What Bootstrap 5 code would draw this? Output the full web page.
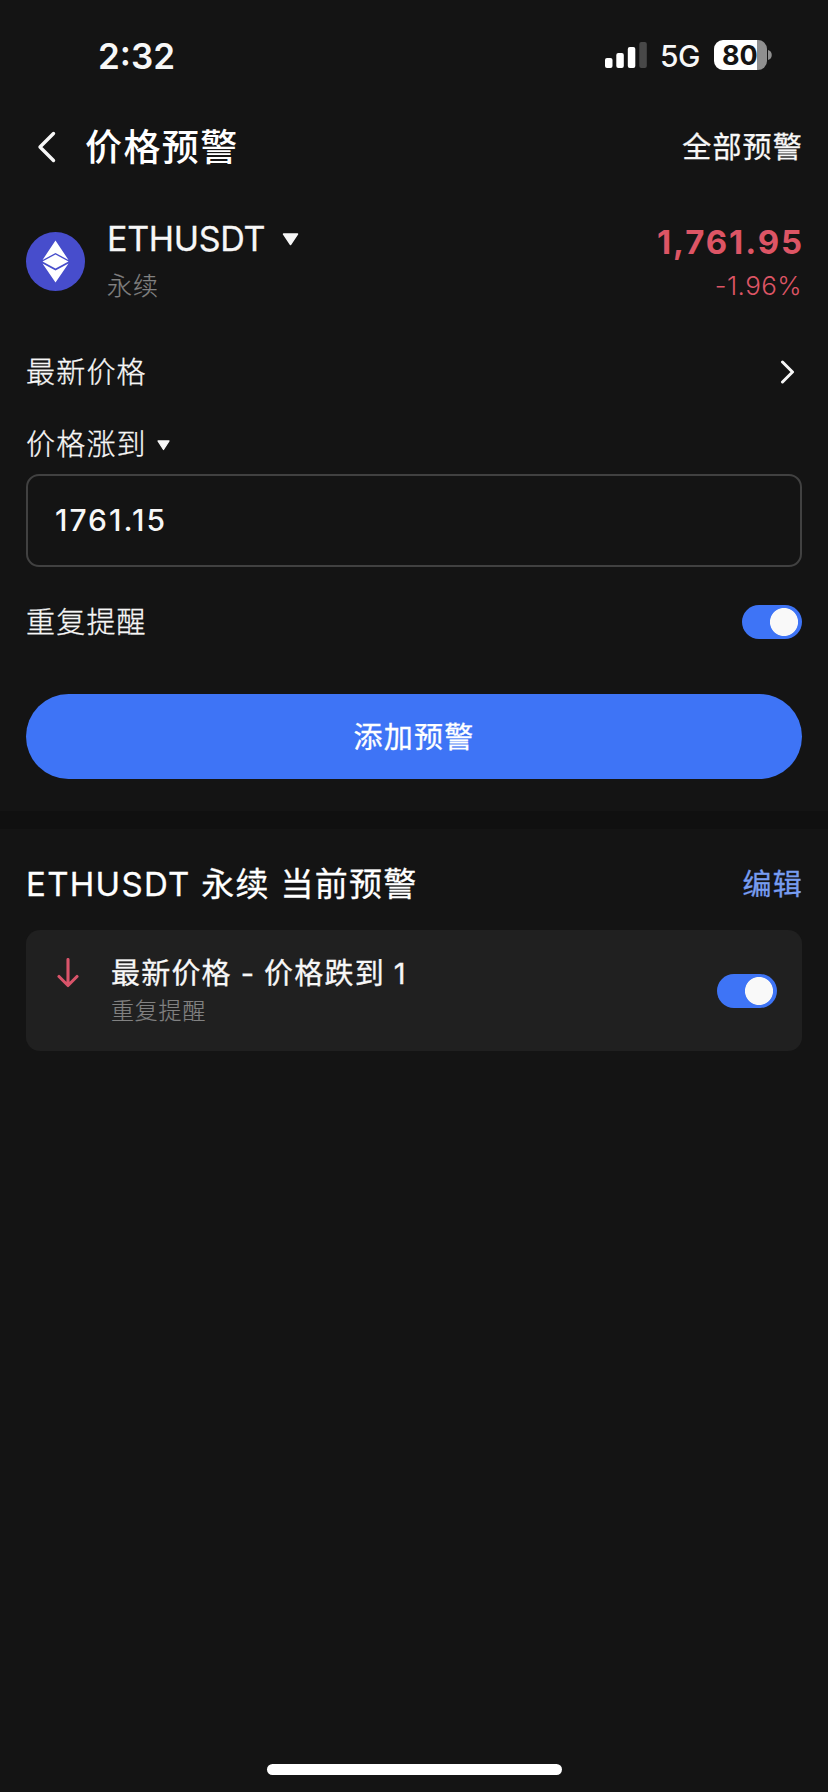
<!DOCTYPE html>
<html lang="zh-CN" data-bs-theme="dark">
<head>
<meta charset="utf-8">
<meta name="viewport" content="width=device-width, initial-scale=1">
<title>价格预警</title>
<link href="https://cdn.jsdelivr.net/npm/bootstrap@5.3.0/dist/css/bootstrap.min.css" rel="stylesheet">
<style>
  body { background: #141414; color: #f7f7f7; font-family: Inter, "Noto Sans CJK SC", sans-serif; font-size: 29px; line-height: 40px; height: 1792px; letter-spacing: 1.2px; overflow: hidden; }
  svg { display: block; flex: none; }
  .screen { padding: 0 26px; }
  .status-bar { height: 96px; padding: 14px 56px 0 74px; }
  .clock { font-size: 35px; font-weight: 600; letter-spacing: 0; padding-top: 1px; }
  .net { font-size: 30px; font-weight: 500; letter-spacing: -.5px; margin: 1px 14px 0 13px; padding-top: 1px; }
  .battery { width: 53px; height: 30px; border-radius: 9px; background: linear-gradient(90deg, #fff 43px, #8f8f8f 43px); color: #141414; font-size: 27px; font-weight: 700; line-height: 31px; letter-spacing: 0; padding-left: 8px; margin-right: 1px; }
  .title-bar { height: 102px; }
  .title-bar h1 { font-size: 37px; font-weight: 500; line-height: 52px; letter-spacing: 1.4px; padding-top: 2px; }
  .title-bar a { padding-top: 2px; margin-right: -1px; }
  .pair { height: 126px; }
  .pair-label { margin-left: 22px; }
  .pair-name { font-size: 34px; letter-spacing: -.3px; font-weight: 400; }
  .caret { margin-left: 17px; }
  .kind { font-size: 25px; line-height: 36px; margin-top: 9px; letter-spacing: 1px; }
  .soft { color: #828282; font-weight: 300; -webkit-text-stroke: .2px currentColor; }
  .loss { color: #dd5565; padding-top: 4px; }
  .last-price { font-size: 33px; font-weight: 700; letter-spacing: 1.9px; line-height: 40px; margin: 0 -2px 6px 0; }
  .change { font-size: 26px; font-weight: 300; letter-spacing: .4px; line-height: 36px; }
  .thin { font-weight: 300; -webkit-text-stroke: .3px currentColor; }
  .price-type { height: 96px; }
  .price-type span, .direction span, .repeat span { padding-top: 2px; }
  .direction { height: 54px; gap: 10px; padding-bottom: 6px; }
  .price-input, .price-input:focus { height: 93px; border: 2px solid #414141; border-radius: 13px; background: transparent; color: #f7f7f7; font-size: 30px; font-weight: 450; letter-spacing: 2px; padding: 0 27px 1px; box-shadow: none; }
  .repeat { height: 109px; margin-bottom: 18px; }
  .form-switch .form-check-input.toggle { width: 60px; height: 34px; margin: 0; border: 0; border-radius: 17px; background: #3e74f6 radial-gradient(circle at 42px 17px, #f9f9f9 13.6px, transparent 14.4px); box-shadow: none; }
  .add-btn { height: 85px; border-radius: 43px; background: #3e74f6; border: 0; color: #fff; font-size: 29px; font-weight: 400; letter-spacing: 1.2px; padding-top: 8px; }
  .band { height: 18px; background: #101010; margin-top: 32px; }
  .current { height: 101px; padding-top: 8px; }
  .section-title { font-size: 33px; font-weight: 400; letter-spacing: 1.3px; line-height: 48px; }
  .edit { color: #779cf0; padding-top: 3px; margin-right: -1px; }
  .alert-card { height: 121px; border: 0; border-radius: 14px; background: #202020; padding: 0 25px 0 31px; }
  .down { margin-bottom: 35px; }
  .alert-text { margin-left: 32px; }
  .alert-name { line-height: 42px; word-spacing: -.5px; }
  .alert-sub { font-size: 23px; line-height: 34px; letter-spacing: .8px; margin-top: -1px; }
  .title-bar a, .pair-name, .section-title, .alert-name, .add-btn, .edit { -webkit-text-stroke: .3px currentColor; }
  .home-bar { width: 295px; height: 11px; border-radius: 6px; background: #fff; left: 267px; top: 1764px; }
</style>
</head>
<body>
<header class="status-bar d-flex align-items-center">
  <span class="clock ms-4">2:32</span>
  <svg class="ms-auto" width="42" height="26" viewBox="0 0 42 26" fill="#fff"><rect y="16" width="7.5" height="10" rx="2"/><rect x="11.3" y="11" width="7.5" height="15" rx="2"/><rect x="22.8" y="5" width="7.5" height="21" rx="2"/><rect x="34.3" width="7.5" height="26" rx="2" fill="#484848"/></svg>
  <span class="net">5G</span>
  <div class="battery">80</div>
  <svg width="4" height="10" viewBox="0 0 4 10"><path d="M0 0c5 1 5 9 0 10z" fill="#8f8f8f"/></svg>
</header>

<main>
  <section class="screen">
    <nav class="title-bar d-flex align-items-center">
      <svg width="59" height="32" viewBox="0 0 59 32" fill="none" stroke="#f7f7f7" stroke-width="3.4" stroke-linecap="round" stroke-linejoin="round"><path d="M27.5 2.5 14 16l13.500 13.500"/></svg>
      <h1 class="mb-0">价格预警</h1>
      <a class="ms-auto text-reset text-decoration-none" href="#">全部预警</a>
    </nav>

    <div class="pair d-flex align-items-center">
      <svg width="59" height="59" viewBox="0 0 59 59"><circle cx="29.500" cy="29.500" r="29.500" fill="#474dcc"/><path fill="#fff" d="M29.500 8.500 42.500 28 29.500 21 16.500 28zM29.500 22.500 42.500 29.500 29.500 36.500 16.500 29.500zM16.500 31.500 29.500 38.500 42.500 31.500 29.500 50.500z"/></svg>
      <div class="pair-label">
        <div class="d-flex align-items-center"><span class="pair-name">ETHUSDT</span><svg class="caret" width="17" height="15" viewBox="0 0 17 15"><path d="M1.500 3h14L8.500 13.500z" fill="#f7f7f7" stroke="#f7f7f7" stroke-width="1.500" stroke-linejoin="round"/></svg></div>
        <div class="soft kind">永续</div>
      </div>
      <div class="ms-auto text-end loss">
        <div class="last-price">1,761.95</div>
        <div class="change">-1.96%</div>
      </div>
    </div>

    <div class="price-type d-flex align-items-center justify-content-between thin">
      <span>最新价格</span>
      <svg width="24" height="24" viewBox="0 0 24 24" fill="none" stroke="#f7f7f7" stroke-width="3" stroke-linecap="round" stroke-linejoin="round"><path d="M4.500 2 14.500 12 4.500 22"/></svg>
    </div>

    <div class="direction d-flex align-items-center thin">
      <span>价格涨到</span>
      <svg width="13" height="13" viewBox="0 0 13 13"><path d="M1 3h11L6.500 11.500z" fill="#f7f7f7" stroke="#f7f7f7" stroke-width="1.300" stroke-linejoin="round"/></svg>
    </div>
    <input class="form-control price-input" type="text" value="1761.15" aria-label="价格">

    <div class="repeat d-flex align-items-center justify-content-between thin">
      <span>重复提醒</span>
      <div class="form-check form-switch p-0 m-0 d-flex"><input class="form-check-input toggle" type="checkbox" role="switch" checked aria-label="重复提醒"></div>
    </div>

    <button class="btn add-btn w-100" type="button">添加预警</button>
  </section>

  <div class="band"></div>

  <section class="screen">
    <div class="current d-flex align-items-center justify-content-between">
      <h2 class="section-title mb-0">ETHUSDT 永续 当前预警</h2>
      <a class="edit text-decoration-none" href="#">编辑</a>
    </div>
    <div class="card alert-card flex-row align-items-center">
      <svg class="down" width="22" height="30" viewBox="0 0 22 30" fill="none" stroke="#d9546a" stroke-width="3.100" stroke-linecap="round" stroke-linejoin="round"><path d="M11 1.500V27M2 18.500 11 27.500 20 18.500"/></svg>
      <div class="alert-text">
        <div class="alert-name">最新价格 - 价格跌到 1</div>
        <div class="soft alert-sub">重复提醒</div>
      </div>
      <div class="form-check form-switch p-0 m-0 ms-auto d-flex"><input class="form-check-input toggle" type="checkbox" role="switch" checked aria-label="开启预警"></div>
    </div>
  </section>
</main>
<div class="home-bar position-absolute"></div>
<script src="https://cdn.jsdelivr.net/npm/bootstrap@5.3.0/dist/js/bootstrap.bundle.min.js"></script>
</body>
</html>
